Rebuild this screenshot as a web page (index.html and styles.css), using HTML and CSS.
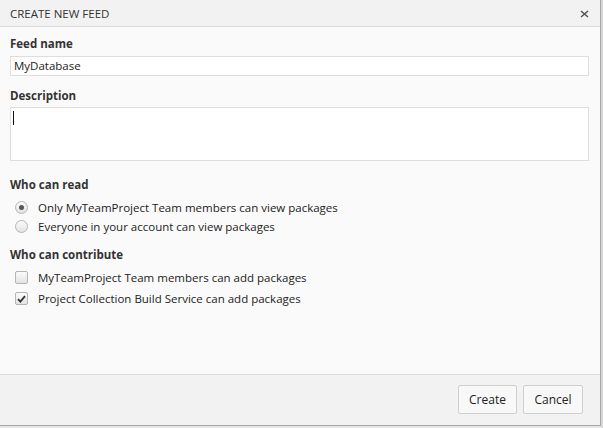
FILE: index.html
```html
<!DOCTYPE html>
<html>
<head>
<meta charset="utf-8">
<link rel="stylesheet" href="styles.css">
</head>
<body>
<div class="page">
  <div class="dialog">
    <div class="header">
      <span class="title">CREATE NEW FEED</span>
      <span class="close" aria-label="close">
        <svg width="9" height="8" viewBox="0 0 9 8"><path d="M1 1 L8 7 M8 1 L1 7" stroke="#555" stroke-width="1.6" fill="none"/></svg>
      </span>
    </div>
    <div class="body">
      <div class="label first">Feed name</div>
      <div class="input">MyDatabase</div>
      <div class="label second">Description</div>
      <div class="textarea"><span class="caret"></span></div>
      <div class="label section">Who can read</div>
      <div class="options radios">
        <div class="option"><span class="radio checked"></span><span>Only MyTeamProject Team members can view packages</span></div>
        <div class="option"><span class="radio"></span><span>Everyone in your account can view packages</span></div>
      </div>
      <div class="label section2">Who can contribute</div>
      <div class="options checks">
        <div class="option"><span class="check"></span><span>MyTeamProject Team members can add packages</span></div>
        <div class="option"><span class="check checked"><svg width="9" height="8" viewBox="0 0 9 8"><path d="M1 4.2 L3.4 6.6 L8 1.2" stroke="#333" stroke-width="1.8" fill="none"/></svg></span><span>Project Collection Build Service can add packages</span></div>
      </div>
    </div>
    <div class="footer">
      <button class="btn">Create</button>
      <button class="btn">Cancel</button>
    </div>
  </div>
  <div class="edge"></div>
</div>
</body>
</html>
```
FILE: styles.css
```css
html, body {
  margin: 0;
  padding: 0;
  width: 603px;
  height: 428px;
  overflow: hidden;
  background: #e6e6e6;
  font-family: "Open Sans", "Noto Sans", sans-serif;
  font-size: 11.5px;
  color: #222;
}
.page {
  display: flex;
  height: 428px;
}
.dialog {
  width: 600px;
  height: 425px;
  border-right: 1px solid #a8a8a8;
  border-bottom: 1px solid #a8a8a8;
  background: #fafafa;
  display: flex;
  flex-direction: column;
}
.edge {
  flex: 1;
  background: #d8d8d8;
}
.header {
  height: 26px;
  background: #f2f2f2;
  border-bottom: 1px solid #dcdcdc;
  display: flex;
  align-items: center;
  justify-content: space-between;
  padding: 0 11px 0 10px;
}
.title {
  color: #333;
}
.close {
  display: flex;
  padding-top: 1px;
}
.body {
  flex: 1;
  padding: 0 11px 0 10px;
}
.label {
  font-weight: 700;
  color: #333;
  line-height: 16px;
}
.label.first { margin-top: 9px; margin-bottom: 4px; }
.label.second { margin-top: 12px; margin-bottom: 3px; }
.label.section { margin-top: 16px; margin-bottom: 5px; }
.label.section2 { margin-top: 11px; margin-bottom: 4px; }
.input {
  height: 18px;
  border: 1px solid #dedede;
  background: #fff;
  padding: 0 3px;
  line-height: 18px;
  color: #222;
}
.textarea {
  height: 45px;
  border: 1px solid #dedede;
  background: #fff;
  padding: 3px 2px 4px;
}
.caret {
  display: block;
  width: 1px;
  height: 14px;
  background: #111;
}
.options {
  display: flex;
  flex-direction: column;
}
.option {
  display: flex;
  align-items: center;
  gap: 10px;
  padding-left: 5px;
  color: #222;
}
.radios .option { height: 19px; }
.checks .option { height: 21px; }
.radio {
  width: 11px;
  height: 11px;
  border-radius: 50%;
  border: 1px solid #b5b5b5;
  background: linear-gradient(#fbfbfb, #e3e3e3);
  display: flex;
  align-items: center;
  justify-content: center;
  flex: none;
}
.radio.checked::after {
  content: "";
  width: 5px;
  height: 5px;
  border-radius: 50%;
  background: #555;
}
.check {
  width: 11px;
  height: 11px;
  border-radius: 2px;
  border: 1px solid #b5b5b5;
  background: linear-gradient(#fbfbfb, #e3e3e3);
  display: flex;
  align-items: center;
  justify-content: center;
  flex: none;
}
.footer {
  height: 51px;
  background: #f2f2f2;
  border-top: 1px solid #dcdcdc;
  display: flex;
  justify-content: flex-end;
  align-items: flex-start;
  gap: 6px;
  padding: 10px 17px 0 0;
  box-sizing: border-box;
}
.btn {
  font-family: inherit;
  font-size: 12px;
  color: #222;
  height: 29px;
  width: 60px;
  background: #f8f8f8;
  border: 1px solid #cfcfcf;
  border-radius: 2px;
  padding: 0;
}
.btn:first-child { width: 59px; }
```
